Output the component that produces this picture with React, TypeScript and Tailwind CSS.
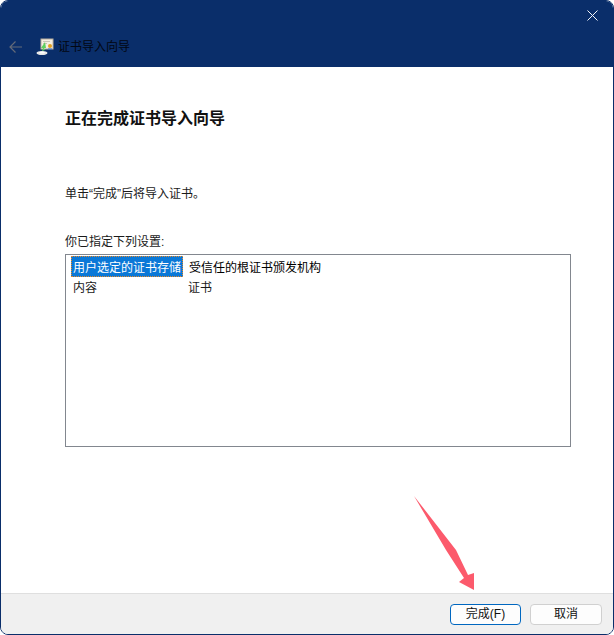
const FONT = "font-['Liberation_Sans','Noto_Sans_CJK_SC',sans-serif]";

const CertIcon = () => (
    <svg width="18" height="18" viewBox="0 0 18 18" className="shrink-0">
        <rect x="5" y="1" width="12" height="10" fill="#f4efe2" stroke="#b9ae9c" />
        <rect x="7" y="3" width="7" height="1" fill="#c9c3b5" />
        <rect x="7" y="5" width="4" height="1" fill="#c9c3b5" />
        <circle cx="14" cy="8" r="2" fill="#e0a020" />
        <path d="M13 10v2M15 10v2" stroke="#2f6fd0" strokeWidth="1" />
        <path d="M9 4 5 10h2l-1 3 3-1-1-2h2z" fill="#5fd05f" />
        <ellipse cx="6" cy="15" rx="5.5" ry="2" fill="#e6e6e6" />
        <ellipse cx="6" cy="14.5" rx="3" ry="1" fill="#ffffff" />
    </svg>
);

const App = () => {
    return (
        <div className={`relative w-[614px] h-[635px] bg-white overflow-hidden ${FONT} text-[12px] leading-[16px] text-black`}>
            <div className="w-full h-full flex flex-col rounded-[8px] border border-[#0a2e6a] overflow-hidden">
                <header className="h-[66px] shrink-0 bg-[#0a2e6a] relative flex items-center pl-[8px] pt-[25px]">
                    <svg width="14" height="14" viewBox="0 0 14 14" fill="none" stroke="#636a78" strokeWidth="1.2" className="shrink-0">
                        <path d="M13 7H1M6.5 1.5 1 7l5.5 5.5" />
                    </svg>
                    <div className="ml-[13px]"><CertIcon /></div>
                    <span className="ml-[4px] text-[12px] text-[#020712]">证书导入向导</span>
                    <svg width="11" height="11" viewBox="0 0 11 11" stroke="#f2f5fa" strokeWidth="1" className="absolute right-[15px] top-[9px]">
                        <path d="M.5.5l10 10M10.5.5l-10 10" />
                    </svg>
                </header>

                <main className="flex-1 flex flex-col pl-[64px] pr-[42px] pt-[41px]">
                    <h1 className="text-[16px] leading-[22px] font-bold text-[#111]">正在完成证书导入向导</h1>
                    <p className="mt-[56px] text-[#1a1a1a]">单击“完成”后将导入证书。</p>
                    <p className="mt-[32px] text-[#1a1a1a]">你已指定下列设置:</p>
                    <div className="mt-[4px] h-[193px] border border-[#82878f] pl-[5px] pt-[1px]">
                        <div className="flex h-[21px] items-center">
                            <div className="w-[112px] h-[21px] bg-[#0a78d7] border border-dotted border-[#e8892a] text-white flex items-center pl-[1px] pt-[2px] whitespace-nowrap overflow-hidden">
                                用户选定的证书存储
                            </div>
                            <span className="ml-[6px] pt-[2px]">受信任的根证书颁发机构</span>
                        </div>
                        <div className="flex h-[21px] items-center pl-[2px] pt-[1px] text-[#1a1a1a]">
                            <span className="w-[110px]">内容</span>
                            <span className="ml-[5px]">证书</span>
                        </div>
                    </div>
                </main>

                <footer className="h-[41px] shrink-0 bg-[#f0f0f0] border-t border-[#dfdfdf] flex items-center justify-end gap-[9px] pr-[11px]">
                    <button className="w-[71px] h-[21px] rounded-[4px] bg-[#fdfdfd] border border-[#0067c0] flex items-center justify-center text-[12px] text-[#111]">
                        完成(F)
                    </button>
                    <button className="w-[72px] h-[21px] rounded-[4px] bg-[#fdfdfd] border border-[#d0d0d0] flex items-center justify-center text-[12px] text-[#111]">
                        取消
                    </button>
                </footer>
            </div>

            <svg width="70" height="100" viewBox="0 0 70 100" className="absolute left-[410px] top-[492px]">
                <path d="M4 4 46 58 58 83 64 81 64 98 49 90 54 86 36 58Z" fill="#fc5a6c" />
            </svg>
        </div>
    );
};

export default App;
